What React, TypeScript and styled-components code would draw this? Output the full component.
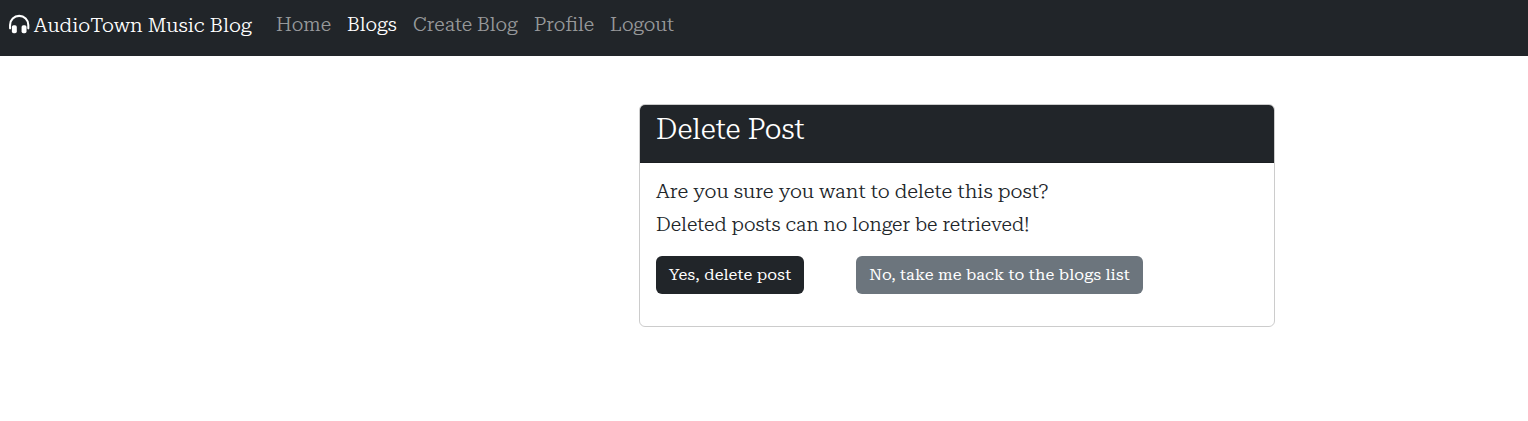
import React from 'react';
import styled, { createGlobalStyle } from 'styled-components';

const GlobalStyle = createGlobalStyle`
  *, *::before, *::after { box-sizing: border-box; }
  body {
    margin: 0;
    background: #fff;
    color: #212529;
    font-family: 'Roboto Serif', 'DejaVu Serif', serif;
    font-size: 16px;
    font-weight: 300;
    line-height: 1.5;
  }
`;

const Navbar = styled.nav`
  display: flex;
  align-items: flex-start;
  height: 56px;
  padding: 8px;
  background: #212529;
  white-space: nowrap;
`;

const Brand = styled.a`
  display: flex;
  align-items: center;
  gap: 4px;
  width: 244px;
  margin-right: 16px;
  padding-top: 2px;
  color: #fff;
  font-size: 20px;
  line-height: 30px;
`;

const HeadphonesIcon = styled.svg`
  display: block;
  width: 22px;
  height: 22px;
  margin-top: -1px;
`;

const NavList = styled.ul`
  display: flex;
  margin: 0;
  padding: 0;
  list-style: none;
`;

const NavItem = styled.li<{ $width: number; $active?: boolean }>`
  width: ${({ $width }) => $width}px;
  padding: 2px 8px 0;
  color: ${({ $active }) => ($active ? '#fff' : 'rgba(255, 255, 255, 0.55)')};
  font-size: 19.36px;
  line-height: 30px;
`;

const Page = styled.main`
  display: flex;
  padding: 48px 253px 0 639px;
`;

const Card = styled.section`
  width: 636px;
  height: 223px;
  overflow: hidden;
  border: 1px solid rgba(0, 0, 0, 0.2);
  background-clip: padding-box;
  border-radius: 6px;
`;

const CardHeader = styled.header`
  height: 58px;
  padding: 8px 16px;
  background: #212529;
  border-bottom: 1px solid #1b1e21;
`;

const Title = styled.h1`
  margin: 0;
  color: #fff;
  font-size: 28px;
  font-weight: 300;
  line-height: 34px;
`;

const CardBody = styled.div`
  padding: 12px 16px;
`;

const Message = styled.p<{ $size: number }>`
  margin: 0;
  font-size: ${({ $size }) => $size}px;
  line-height: 33px;
  white-space: nowrap;
`;

const Actions = styled.div`
  display: flex;
  gap: 52px;
  margin-top: 15px;
`;

const Button = styled.button<{ $width: number; $secondary?: boolean }>`
  width: ${({ $width }) => $width}px;
  height: 38px;
  padding: 0 12px;
  border: 0;
  border-radius: 6px;
  background: ${({ $secondary }) => ($secondary ? '#6c757d' : '#212529')};
  color: #fff;
  font: inherit;
  font-size: 16px;
  font-weight: 400;
  letter-spacing: 0.18px;
  line-height: 24px;
  white-space: nowrap;
`;

export default function App() {
  return (
    <>
      <GlobalStyle />
      <Navbar>
        <Brand>
          <HeadphonesIcon viewBox="0 0 22 22" aria-hidden="true">
            <path d="M2.1 14.4V10.9a9.2 9.1 0 0 1 18.4 0v3.5" fill="none" stroke="currentColor" strokeWidth="2.1" strokeLinecap="round" />
            <rect x="3.9" y="11.2" width="5" height="8.2" rx="1.8" fill="currentColor" />
            <rect x="13.7" y="11.2" width="5" height="8.2" rx="1.8" fill="currentColor" />
          </HeadphonesIcon>
          AudioTown Music Blog
        </Brand>
        <NavList>
          <NavItem $width={71}>Home</NavItem>
          <NavItem $width={66} $active>Blogs</NavItem>
          <NavItem $width={121}>Create Blog</NavItem>
          <NavItem $width={76}>Profile</NavItem>
          <NavItem $width={80}>Logout</NavItem>
        </NavList>
      </Navbar>
      <Page>
        <Card>
          <CardHeader><Title>Delete Post</Title></CardHeader>
          <CardBody>
            <Message $size={20}>Are you sure you want to delete this post?</Message>
            <Message $size={19.36}>Deleted posts can no longer be retrieved!</Message>
            <Actions>
              <Button $width={148}>Yes, delete post</Button>
              <Button $width={287} $secondary>No, take me back to the blogs list</Button>
            </Actions>
          </CardBody>
        </Card>
      </Page>
    </>
  );
}
